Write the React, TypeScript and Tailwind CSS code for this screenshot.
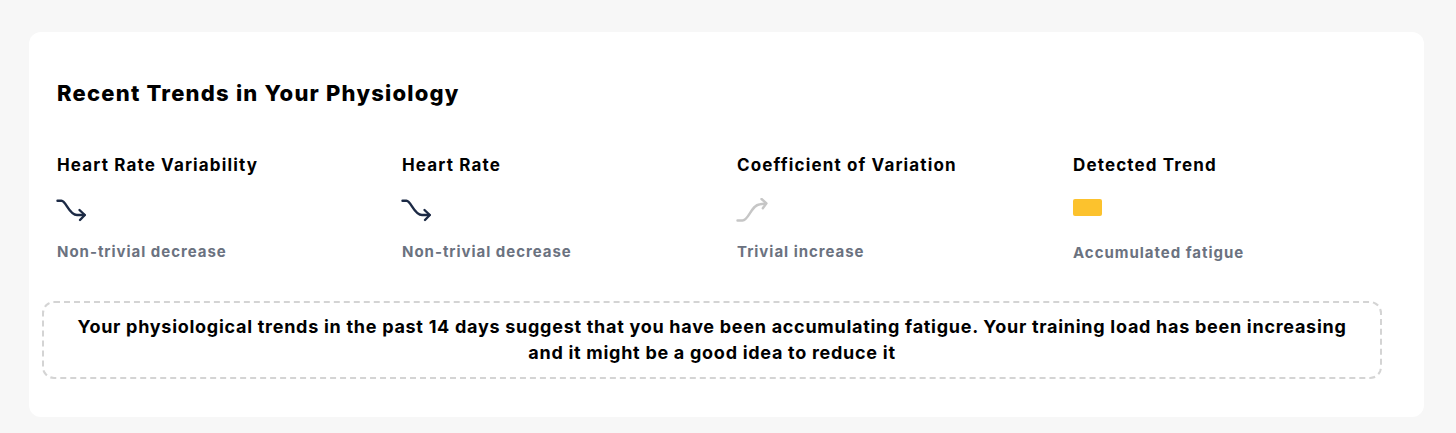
import React from 'react'

type Trend = 'down' | 'up' | 'fatigue'

const METRICS: { title: string; trend: Trend; label: string; width: string }[] = [
  { title: 'Heart Rate Variability', trend: 'down', label: 'Non-trivial decrease', width: 'w-[345px]' },
  { title: 'Heart Rate', trend: 'down', label: 'Non-trivial decrease', width: 'w-[335px]' },
  { title: 'Coefficient of Variation', trend: 'up', label: 'Trivial increase', width: 'w-[336px]' },
  { title: 'Detected Trend', trend: 'fatigue', label: 'Accumulated fatigue', width: 'flex-1' },
]

function TrendIcon({ trend }: { trend: Trend }) {
  if (trend === 'fatigue') {
    return <div className="w-[29px] h-[17px] rounded-[2px] bg-[#fcc22d] mt-[2px]" />
  }
  if (trend === 'up') {
    return (
      <svg width="32" height="24" viewBox="0 0 32 24" fill="none" className="block ml-[-1px] mt-[-1px]">
        <path
          d="M1.5 22.5 H6.5 C13 22.5 15 7 24 6.2 L29.5 5.5"
          stroke="#c6c6c6"
          strokeWidth="2.4"
          strokeLinecap="round"
          strokeLinejoin="round"
        />
        <path d="M25.5 1 L30.5 5.3 L26.8 10.2" stroke="#c6c6c6" strokeWidth="2.4" strokeLinecap="round" strokeLinejoin="round" />
      </svg>
    )
  }
  return (
    <svg width="32" height="24" viewBox="0 0 32 24" fill="none" className="block ml-[-1px] mt-[-1px]">
      <path
        d="M1.5 2.7 H5.5 C10 2.7 13 17 21 17 H28.5"
        stroke="#1c2a45"
        strokeWidth="2.4"
        strokeLinecap="round"
        strokeLinejoin="round"
      />
      <path d="M23.5 12 L28.8 17 L24 22" stroke="#1c2a45" strokeWidth="2.4" strokeLinecap="round" strokeLinejoin="round" />
    </svg>
  )
}

export default function App() {
  return (
    <div className="min-h-[433px] bg-[#f7f7f7] pl-[29px] pr-[32px] pt-[32px] pb-[17px] font-['Inter',sans-serif]">
      <div className="bg-white rounded-[12px] pt-[47px] pb-[38px] pl-[13px]">
        <div className="pl-[15px]">
          <h2 className="text-[22px] leading-[28px] font-extrabold text-black tracking-[0.055em]">
            Recent Trends in Your Physiology
          </h2>

          <div className="flex mt-[46px]">
            {METRICS.map((m) => (
              <div key={m.title} className={m.width}>
                <p className="text-[17px] leading-[24px] font-bold text-black tracking-[0.067em]">{m.title}</p>
                <div className="mt-[22px] h-6">
                  <TrendIcon trend={m.trend} />
                </div>
                <p className="mt-[20px] text-[15px] leading-[20px] font-bold text-[#6b7280] tracking-[0.065em]">
                  {m.label}
                </p>
              </div>
            ))}
          </div>
        </div>

        <div className="mt-[38px] w-[1340px] border-2 border-dashed border-[#d4d4d4] rounded-[12px] px-6 py-[11px]">
          <p className="text-center text-[18px] leading-[26px] font-bold text-black tracking-[0.04em]">
            Your physiological trends in the past 14 days suggest that you have been accumulating fatigue. Your training
            load has been increasing and it might be a good idea to reduce it
          </p>
        </div>
      </div>
    </div>
  )
}
